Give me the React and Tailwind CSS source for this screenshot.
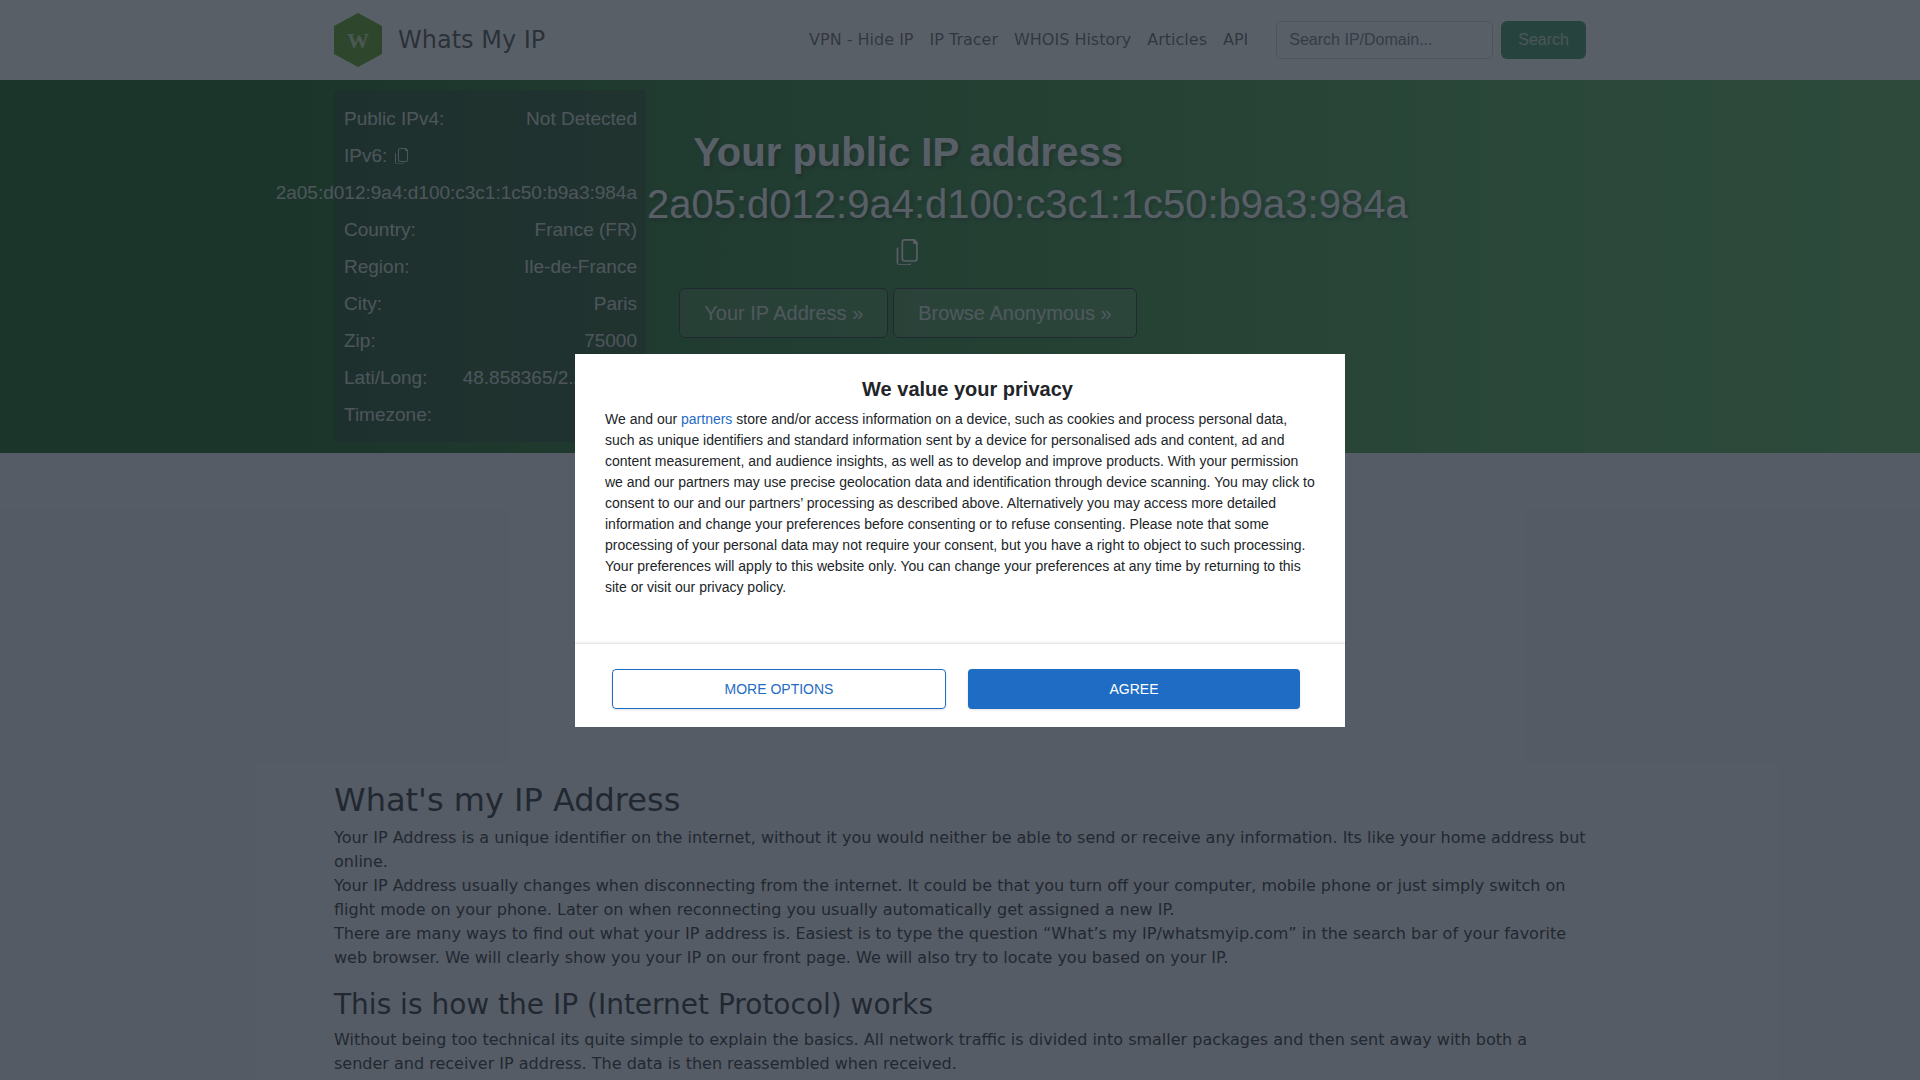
const stats = [
  ['Public IPv4:', 'Not Detected'],
  ['IPv6:', null],
  ['', '2a05:d012:9a4:d100:c3c1:1c50:b9a3:984a'],
  ['Country:', 'France (FR)'],
  ['Region:', 'Ile-de-France'],
  ['City:', 'Paris'],
  ['Zip:', '75000'],
  ['Lati/Long:', '48.858365/2.294532'],
  ['Timezone:', '+02:00'],
];

const navLinks = ['VPN - Hide IP', 'IP Tracer', 'WHOIS History', 'Articles', 'API'];

function CopyIcon({ className }) {
  return (
    <svg viewBox="0 0 16 16" fill="currentColor" className={className}>
      <path d="M4 2a2 2 0 0 1 2-2h6l2 2v10a2 2 0 0 1-2 2H6a2 2 0 0 1-2-2V2zm2-1a1 1 0 0 0-1 1v10a1 1 0 0 0 1 1h6a1 1 0 0 0 1-1V3h-1.5L11 1.5V1H6z" />
      <path d="M2 5a1 1 0 0 0-1 1v8a2 2 0 0 0 2 2h6a1 1 0 0 0 1-1h-1a.5.5 0 0 1-.5.5H3A1 1 0 0 1 2 14V5z" />
    </svg>
  );
}

function Logo() {
  return (
    <svg viewBox="0 0 48 54" className="w-[48px] h-[54px]">
      <polygon points="24,0 48,13 48,41 24,54 0,41 0,13" fill="#529a14" />
      <text x="24" y="35" textAnchor="middle" fontFamily="Liberation Serif, serif" fontWeight="700" fontSize="22" fill="#c8e0b0">W</text>
    </svg>
  );
}

export default function App() {
  return (
    <div className="relative h-screen overflow-hidden bg-[#f1f2f6] font-['DejaVu_Sans',sans-serif] text-[16px] text-[#212529]">
      {/* Navbar */}
      <nav className="h-[80px] bg-white">
        <div className="mx-auto flex h-full w-[1252px] items-center justify-between">
          <div className="flex items-center gap-4">
            <Logo />
            <span className="text-[24px] text-[#212529d9]">Whats My IP</span>
          </div>
          <div className="flex items-center">
            <ul className="flex gap-4 text-[16px] text-[#000000a6]">
              {navLinks.map((link) => (
                <li key={link}>{link}</li>
              ))}
            </ul>
            <div className="ml-[28px] flex items-center gap-2">
              <div className="flex h-[38px] w-[217px] items-center rounded-md border border-[#ced4da] bg-white px-3 font-['Liberation_Sans',sans-serif] text-[#6c757d]">
                Search IP/Domain...
              </div>
              <button className="h-[38px] rounded-md bg-[#3a8f5a] px-[17px] font-['Liberation_Sans',sans-serif] text-[#ffffffb3]">Search</button>
            </div>
          </div>
        </div>
      </nav>

      {/* Hero */}
      <section className="h-[373px] bg-[linear-gradient(90deg,#0d5910_15%,#45a24b_80%,#51ad50_100%)] font-['Liberation_Sans',sans-serif] text-white">
        <div className="mx-auto flex w-[1252px] pt-[10px]">
          <div className="h-[352px] w-[312px] shrink-0 rounded bg-[#21252966] pb-[5px] pl-[10px] pr-[9px] pt-[10px] text-[19px] leading-[37px] text-[#ffffffcc]">
            {stats.map(([label, value]) => (
              <div key={label + value} className={`flex whitespace-nowrap ${label ? 'justify-between' : 'justify-end'}`}>
                {label && (
                  <span className="flex items-center gap-[7px]">
                    {label}
                    {label === 'IPv6:' && <CopyIcon className="h-[16px] w-[16px]" />}
                  </span>
                )}
                {value && <span>{value}</span>}
              </div>
            ))}
          </div>
          <div className="w-[524px] pt-[38px]">
            <h1 className="text-center text-[40px] font-bold leading-[48px] [text-shadow:2px_2px_4px_rgba(0,0,0,0.4)]">Your public IP address</h1>
            <p className="ml-px whitespace-nowrap text-[40px] leading-[56px] [text-shadow:2px_2px_4px_rgba(0,0,0,0.4)]">2a05:d012:9a4:d100:c3c1:1c50:b9a3:984a</p>
            <div className="flex justify-center pt-[7px]">
              <CopyIcon className="h-[26px] w-[26px]" />
            </div>
            <div className="mt-[23px] flex justify-center gap-[5px]">
              <button className="h-[50px] rounded-md border border-[#212529] bg-[#ffffff1f] px-6 text-[20px] text-[#ffffffcc]">Your IP Address »</button>
              <button className="h-[50px] rounded-md border border-[#212529] bg-[#ffffff1f] px-6 text-[20px] text-[#ffffffcc]">Browse Anonymous »</button>
            </div>
          </div>
        </div>
      </section>

      {/* Article */}
      <main className="mx-auto w-[1252px] pt-[328px]">
        <h2 className="text-[32px] leading-[38px]">What's my IP Address</h2>
        <p className="mt-[7px] leading-[24px]">Your IP Address is a unique identifier on the internet, without it you would neither be able to send or receive any information. Its like your home address but online.</p>
        <p className="leading-[24px]">Your IP Address usually changes when disconnecting from the internet. It could be that you turn off your computer, mobile phone or just simply switch on flight mode on your phone. Later on when reconnecting you usually automatically get assigned a new IP.</p>
        <p className="leading-[24px]">There are many ways to find out what your IP address is. Easiest is to type the question “What’s my IP/whatsmyip.com” in the search bar of your favorite web browser. We will clearly show you your IP on our front page. We will also try to locate you based on your IP.</p>
        <h3 className="mt-[18px] text-[28px] leading-[34px]">This is how the IP (Internet Protocol) works</h3>
        <p className="mt-[6px] leading-[24px]">Without being too technical its quite simple to explain the basics. All network traffic is divided into smaller packages and then sent away with both a sender and receiver IP address. The data is then reassembled when received.</p>
      </main>

      {/* Consent overlay */}
      <div className="absolute inset-0 bg-[rgba(33,41,52,0.75)]" />
      <div className="absolute left-[575px] top-[354px] flex h-[373px] w-[770px] flex-col bg-white font-['Liberation_Sans',sans-serif] text-[#212529]">
        <div className="flex-1 px-[30px] pt-[21px]">
          <h2 className="pl-[15px] text-center text-[20px] font-bold leading-[28px]">We value your privacy</h2>
          <p className="mt-[6px] text-[14px] leading-[21px]">
            We and our <span className="text-[#1f6cc4]">partners</span> store and/or access information on a device, such as cookies and process personal data, such as unique identifiers and standard information sent by a device for personalised ads and content, ad and content measurement, and audience insights, as well as to develop and improve products. With your permission we and our partners may use precise geolocation data and identification through device scanning. You may click to consent to our and our partners’ processing as described above. Alternatively you may access more detailed information and change your preferences before consenting or to refuse consenting. Please note that some processing of your personal data may not require your consent, but you have a right to object to such processing. Your preferences will apply to this website only. You can change your preferences at any time by returning to this site or visit our privacy policy.
          </p>
        </div>
        <div className="flex h-[84px] items-start justify-between border-t border-[#e5e7eb] pl-[37px] pr-[45px] pt-[25px] shadow-[0_-1px_2px_rgba(0,0,0,0.08)]">
          <button className="h-[40px] w-[334px] rounded-sm border border-[#1f6cc4] text-[14px] text-[#1f6cc4] shadow-sm">MORE OPTIONS</button>
          <button className="h-[40px] w-[332px] rounded-sm bg-[#1f6cc4] text-[14px] text-white shadow-sm">AGREE</button>
        </div>
      </div>
    </div>
  );
}
